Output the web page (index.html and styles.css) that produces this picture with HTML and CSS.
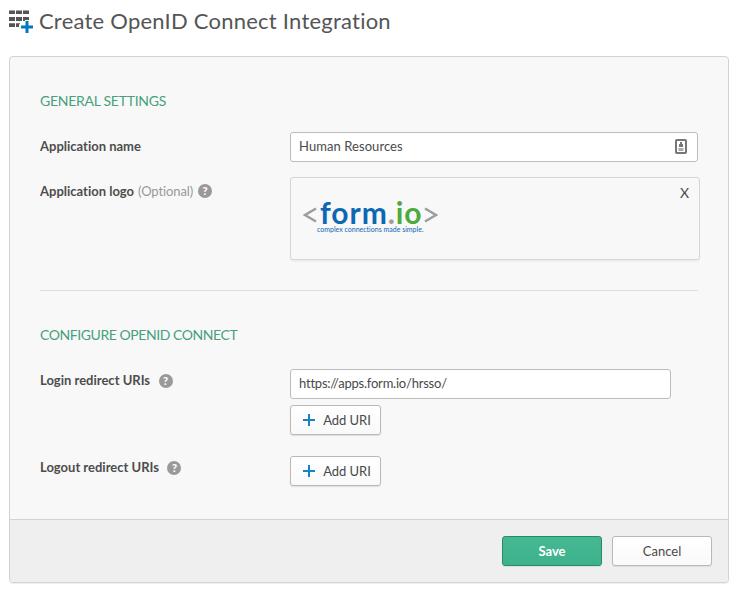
FILE: index.html
```html
<!DOCTYPE html>
<html lang="en">
<head>
<meta charset="utf-8">
<title>Create OpenID Connect Integration</title>
<link rel="stylesheet" href="styles.css">
</head>
<body>
<header class="page-header">
  <svg class="apps-icon" width="25" height="25" viewBox="0 0 25 25" aria-hidden="true">
    <path fill="#555" d="M0 1.500h6V5H0zM7 1.500h6V5H7zM14 1.500h6V5h-6zM0 8h6v4H0zM7 8h6v4H7zM14 8h6v3h-4v1h-2zM0 14.300h6V18H0zM7 14.300h4v1h-1V18H7z"/>
    <path fill="#0079c2" d="M16.500 12h3v4.500H24v3h-4.500V24h-3v-4.500H12v-3h4.500z"/>
  </svg>
  <h1 class="page-title">Create OpenID Connect Integration</h1>
</header>
<main class="panel">
  <div class="panel-body">
    <section class="section general">
      <h2 class="heading heading-general">GENERAL SETTINGS</h2>
      <div class="row row-name">
        <label class="label">Application name</label>
        <div class="input"><span class="name-value">Human Resources</span>
          <svg class="contact-icon" width="12" height="15" viewBox="0 0 12 15" aria-hidden="true">
            <rect x="1" y="1" width="10" height="13" rx=".8" fill="#fff" stroke="#777" stroke-width="2"/>
            <path fill="#777" d="M5 3h2v2h1v3H4V5h1z"/>
            <path fill="#aaa" d="M3.500 9h5v3h-5z"/>
          </svg>
        </div>
      </div>
      <div class="row row-logo">
        <div class="label"><span>Application logo</span> <span class="optional">(Optional)</span><i class="help help-logo">?</i></div>
        <div class="logo-box">
          <div class="logo">
            <svg class="chevron" width="14" height="16" viewBox="0 0 14 16" aria-hidden="true"><path d="M13 1.500 2 8l11 6.500" fill="none" stroke="#9b9da0" stroke-width="2.500"/></svg>
            <div class="brand">
              <div class="wordmark"><span class="blue">form</span><span class="gray">.</span><span class="green">io</span></div>
              <div class="tagline">complex connections made simple.</div>
            </div>
            <svg class="chevron" width="14" height="16" viewBox="0 0 14 16" aria-hidden="true"><path d="M1 1.500 12 8 1 14.500" fill="none" stroke="#9b9da0" stroke-width="2.500"/></svg>
          </div>
          <span class="remove">X</span>
        </div>
      </div>
    </section>
    <section class="section configure">
      <h2 class="heading heading-configure">CONFIGURE OPENID CONNECT</h2>
      <div class="row row-login">
        <div class="label"><span>Login redirect URIs</span><i class="help">?</i></div>
        <div class="uris">
          <div class="input input-uri"><span class="url-value">https://apps.form.io/hrsso/</span></div>
          <button class="button add"><svg width="12" height="12" viewBox="0 0 12 12" shape-rendering="crispEdges" aria-hidden="true"><path fill="#1683c9" d="M5 0h2v5h5v2H7v5H5V7H0V5h5z"/></svg><span>Add URI</span></button>
        </div>
      </div>
      <div class="row row-logout">
        <div class="label"><span>Logout redirect URIs</span><i class="help">?</i></div>
        <button class="button add"><svg width="12" height="12" viewBox="0 0 12 12" shape-rendering="crispEdges" aria-hidden="true"><path fill="#1683c9" d="M5 0h2v5h5v2H7v5H5V7H0V5h5z"/></svg><span>Add URI</span></button>
      </div>
    </section>
  </div>
  <footer class="panel-footer">
    <button class="button save">Save</button>
    <button class="button cancel">Cancel</button>
  </footer>
</main>
</body>
</html>
```
FILE: styles.css
```css
* { box-sizing: border-box; }
body {
  margin: 0;
  height: 589px;
  overflow: hidden;
  background: #fff;
  color: #4a4a4a;
  font: 13px/20px Lato, "Open Sans", sans-serif;
  font-variant-ligatures: none;
}
h1, h2 { margin: 0; font-weight: 400; }
.page-header { display: flex; height: 56px; padding: 9px 0 0 9px; }
.apps-icon { flex: none; }
.page-title {
  margin: -1px 0 0 5px;
  font-size: 22px;
  line-height: 25px;
  letter-spacing: .23px;
  white-space: nowrap;
  color: #555;
}
.panel {
  display: flex;
  flex-direction: column;
  width: 720px;
  height: 527px;
  margin-left: 9px;
  overflow: hidden;
  background: #f8f8f8;
  border: 1px solid #d3d3d3;
  border-radius: 4px;
  box-shadow: 0 1px 1px #eee;
}
.panel-body { flex: 1; padding: 34px 30px 0; }
.heading { height: 20px; font-size: 14px; line-height: 20px; color: #46a07c; white-space: nowrap; }
.heading-general { letter-spacing: -.27px; }
.heading-configure { letter-spacing: -.43px; }
.general { height: 200px; border-bottom: 1px solid #ddd; }
.configure { padding-top: 34px; }
.row { display: grid; grid-template-columns: 250px 410px; align-items: start; }
.row-name { margin-top: 21px; height: 45px; }
.row-logo { height: 84px; }
.row-login { margin-top: 24px; height: 87px; }
.label { display: flex; align-items: center; height: 29px; font-weight: 700; color: #4d4d4d; white-space: nowrap; margin-top: -1px; }
.row-login .label, .row-logout .label { height: 24px; }
.optional { margin-left: 4px; font-weight: 400; letter-spacing: -.1px; color: #999; }
.help {
  width: 14px;
  height: 14px;
  margin: 1px 0 0 8.500px;
  border-radius: 50%;
  background: #999;
  color: #fff;
  font: 900 11px/14px Lato, sans-serif;
  text-align: center;
}
.help-logo { margin-left: 5px; }
.input {
  display: flex;
  align-items: center;
  justify-content: space-between;
  width: 408px;
  height: 30px;
  padding: 0 10px 2px 8px;
  background: #fff;
  border: 1px solid #bcbcbc;
  border-radius: 3px;
}
.name-value { letter-spacing: .07px; }
.url-value { letter-spacing: -.22px; }
.input-uri { width: 381px; margin-bottom: 6px; }
.contact-icon { margin-top: 1px; }
.logo-box {
  display: flex;
  justify-content: space-between;
  width: 410px;
  height: 83px;
  padding: 5px 10px 0 12px;
  border: 1px solid #d5d5d5;
  border-radius: 3px;
  box-shadow: 0 2px 1px #eee;
}
.logo { display: flex; padding-top: 12px; }
.chevron { margin-top: 12px; }
.brand { width: 107px; }
.wordmark {
  height: 30px;
  padding-left: 3px;
  font-size: 30px;
  font-weight: 700;
  line-height: 34px;
  letter-spacing: .95px;
  white-space: nowrap;
}
.blue { color: #0d68b3; }
.gray { color: #9b9da0; }
.green { color: #4caa3f; }
.tagline { font-size: 7px; line-height: 8px; color: #0d68b3; white-space: nowrap; }
.remove { font-size: 14px; }
.button {
  display: flex;
  align-items: center;
  justify-content: center;
  width: 100px;
  height: 30px;
  padding: 0 0 1px;
  border: 1px solid #b9b9b9;
  border-radius: 3px;
  background: linear-gradient(#fff, #f9f9f9);
  box-shadow: 0 1px 1px #ddd;
  color: #4a4a4a;
  font: 13px/20px Lato, sans-serif;
}
.add { width: 91px; gap: 8px; padding: 0 0 1px 3px; }
.add svg { margin-top: 1px; }
.add span { letter-spacing: -.05px; }
.panel-footer {
  display: flex;
  justify-content: flex-end;
  gap: 10px;
  height: 63px;
  padding: 16px 16px 0 0;
  border-top: 1px solid #d3d3d3;
  background: #efefef;
}
.save { border-color: #298a67; background: linear-gradient(#46b894, #3db28b); color: #fff; font-weight: 700; }
```
